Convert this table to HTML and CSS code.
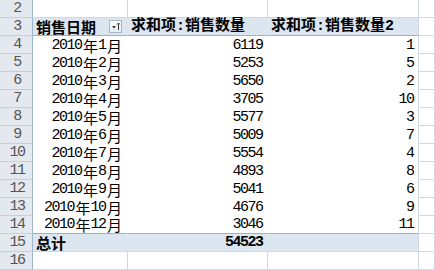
FILE: index.html
```html
<!DOCTYPE html>
<html lang="zh-CN">
<head>
<meta charset="utf-8">
<link rel="stylesheet" href="styles.css">
</head>
<body>
<div class="sheet">
  <div class="row">
    <div class="rh">2</div><div class="c a grid"></div><div class="c b grid"></div><div class="c cc grid"></div><div class="c d grid"></div>
  </div>
  <div class="row">
    <div class="rh">3</div>
    <div class="c a hdr"><span class="t">销售日期</span><span class="fbtn"><svg width="11" height="11" viewBox="0 0 11 11"><path d="M2 5h4l-2 2.5z" fill="#333"/><path d="M8.5 2v7M7 3.5l1.5-1.5 1.5 1.5" stroke="#333" stroke-width="1" fill="none"/></svg></span></div>
    <div class="c b hdr"><span class="t">求和项<span class="n">:</span>销售数量</span></div>
    <div class="c cc hdr"><span class="t">求和项<span class="n">:</span>销售数量<span class="n">2</span></span></div>
    <div class="c d grid"></div>
  </div>
  <div class="row"><div class="rh">4</div><div class="c a r"><span class="n">2010</span>年<span class="n">1</span>月</div><div class="c b r"><span class="n">6119</span></div><div class="c cc r"><span class="n">1</span></div><div class="c d grid"></div></div>
  <div class="row"><div class="rh">5</div><div class="c a r"><span class="n">2010</span>年<span class="n">2</span>月</div><div class="c b r"><span class="n">5253</span></div><div class="c cc r"><span class="n">5</span></div><div class="c d grid"></div></div>
  <div class="row"><div class="rh">6</div><div class="c a r"><span class="n">2010</span>年<span class="n">3</span>月</div><div class="c b r"><span class="n">5650</span></div><div class="c cc r"><span class="n">2</span></div><div class="c d grid"></div></div>
  <div class="row"><div class="rh">7</div><div class="c a r"><span class="n">2010</span>年<span class="n">4</span>月</div><div class="c b r"><span class="n">3705</span></div><div class="c cc r"><span class="n">10</span></div><div class="c d grid"></div></div>
  <div class="row"><div class="rh">8</div><div class="c a r"><span class="n">2010</span>年<span class="n">5</span>月</div><div class="c b r"><span class="n">5577</span></div><div class="c cc r"><span class="n">3</span></div><div class="c d grid"></div></div>
  <div class="row"><div class="rh">9</div><div class="c a r"><span class="n">2010</span>年<span class="n">6</span>月</div><div class="c b r"><span class="n">5009</span></div><div class="c cc r"><span class="n">7</span></div><div class="c d grid"></div></div>
  <div class="row"><div class="rh">10</div><div class="c a r"><span class="n">2010</span>年<span class="n">7</span>月</div><div class="c b r"><span class="n">5554</span></div><div class="c cc r"><span class="n">4</span></div><div class="c d grid"></div></div>
  <div class="row"><div class="rh">11</div><div class="c a r"><span class="n">2010</span>年<span class="n">8</span>月</div><div class="c b r"><span class="n">4893</span></div><div class="c cc r"><span class="n">8</span></div><div class="c d grid"></div></div>
  <div class="row"><div class="rh">12</div><div class="c a r"><span class="n">2010</span>年<span class="n">9</span>月</div><div class="c b r"><span class="n">5041</span></div><div class="c cc r"><span class="n">6</span></div><div class="c d grid"></div></div>
  <div class="row"><div class="rh">13</div><div class="c a r"><span class="n">2010</span>年<span class="n">10</span>月</div><div class="c b r"><span class="n">4676</span></div><div class="c cc r"><span class="n">9</span></div><div class="c d grid"></div></div>
  <div class="row"><div class="rh">14</div><div class="c a r last"><span class="n">2010</span>年<span class="n">12</span>月</div><div class="c b r last"><span class="n">3046</span></div><div class="c cc r last"><span class="n">11</span></div><div class="c d grid"></div></div>
  <div class="row"><div class="rh">15</div><div class="c a tot"><span class="t">总计</span></div><div class="c b tot r"><span class="n">54523</span></div><div class="c cc tot"></div><div class="c d grid"></div></div>
  <div class="row"><div class="rh">16</div><div class="c a grid"></div><div class="c b grid"></div><div class="c cc grid"></div><div class="c d grid"></div></div>
</div>
</body>
</html>
```
FILE: styles.css
```css
html, body {
  margin: 0;
  padding: 0;
  background: #ffffff;
}
.sheet {
  width: 435px;
  height: 270px;
  overflow: hidden;
  font-family: "Noto Sans CJK SC", sans-serif;
  font-size: 15px;
  color: #000;
}
.row {
  display: flex;
  height: 18px;
}
.rh {
  box-sizing: border-box;
  width: 33px;
  flex: none;
  height: 18px;
  background: #e4e9f0;
  border-right: 1px solid #9eb6ce;
  border-bottom: 1px solid #c5d0dc;
  color: #555;
  font-family: "Liberation Mono", monospace;
  font-size: 15px;
  letter-spacing: -1.5px;
  text-align: center;
  line-height: 18px;
  padding-left: 2px;
}
.c {
  box-sizing: border-box;
  height: 18px;
  flex: none;
  display: flex;
  align-items: flex-end;
  line-height: 17px;
  padding: 0 3px 0 3px;
  border-right: 1px solid #d0d7e5;
  white-space: nowrap;
}
.a { width: 95px; }
.b { width: 140px; }
.cc { width: 151px; }
.d { flex: 1; }
.grid { border-bottom: 1px solid #d0d7e5; }
.r {
  justify-content: flex-end;
  background: #fff;
  border-right-color: #fff;
  padding-right: 3px;
}
.cc.r, .cc.hdr, .cc.tot { border-right-color: #d0d7e5; }
.a.r { padding-right: 5px; }
.last { border-bottom: 1px solid #95b3d7; }
.hdr {
  background: #dce6f1;
  border-bottom: 1px solid #95b3d7;
  border-right-color: #dce6f1;
  font-weight: 700;
}
.tot {
  background: #dce6f1;
  border-bottom: 1px solid #d0d7e5;
  border-right-color: #dce6f1;
  font-weight: 700;
}
.tot.r { justify-content: flex-end; }
.t { display: inline-block; }
.n {
  font-family: "Liberation Mono", monospace;
  letter-spacing: -1.5px;
  margin-right: 1.5px;
  font-weight: 400;
}
.hdr .n, .tot .n { font-weight: 700; }
.a.hdr { align-items: center; }
.fbtn {
  margin-left: auto;
  margin-right: 2px;
  width: 13px;
  height: 13px;
  box-sizing: border-box;
  border: 1px solid #a9b6c6;
  background: linear-gradient(#ffffff, #e8ecf2);
  display: flex;
  align-items: center;
  justify-content: center;
}
.fbtn svg { display: block; }
```
